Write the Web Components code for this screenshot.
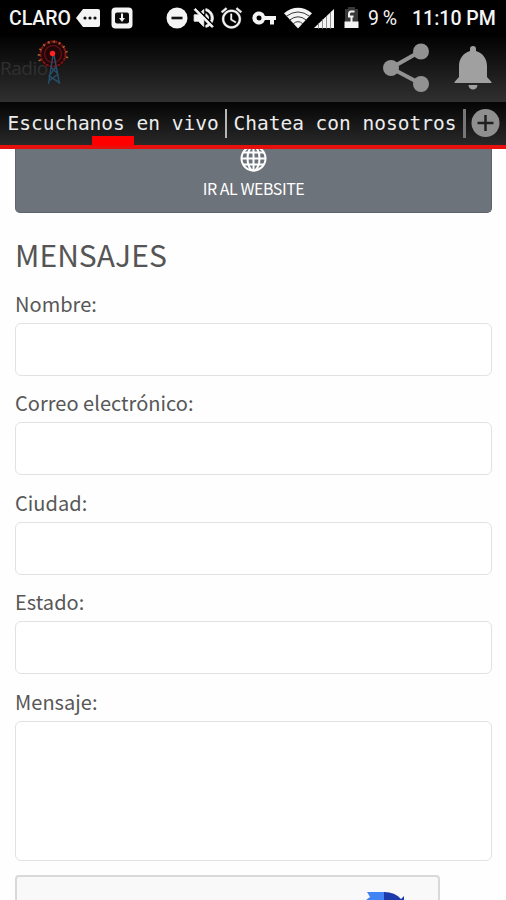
<!DOCTYPE html>
<html lang="es">
<head>
<meta charset="utf-8">
<title>Mensajes</title>
<style>
html,body{margin:0;height:100%;overflow:hidden;background:#fff}
</style>
</head>
<body>
<radio-app></radio-app>
<script>
const define = (name, html) => customElements.define(name, class extends HTMLElement {
  constructor() {
    super();
    const t = document.createElement('template');
    t.innerHTML = html;
    this.attachShadow({mode: 'open'}).appendChild(t.content.cloneNode(true));
  }
});

define('status-bar', `
<style>
:host{display:flex;align-items:center;height:36px;background:#000;color:#f4f4f4;font:500 19.5px/36px Roboto,sans-serif;white-space:nowrap}
svg{display:block;flex:none;fill:#f4f4f4}
span{padding-top:2px;line-height:34px}
.carrier{width:62px;margin-left:9px;letter-spacing:-.05px}
.pct{width:31px;margin-left:9px;font-weight:400;word-spacing:-1px}
.time{margin-left:13px;letter-spacing:0}
</style>
<span class="carrier">CLARO</span>
<svg style="margin-left:5px" width="25" height="20" viewBox="0 0 25 20"><path d="M7 1h15q2 0 2 2v14q0 2-2 2H7L0 10z"/><g fill="#111"><circle cx="9" cy="10" r="1.6"/><circle cx="14" cy="10" r="1.6"/><circle cx="19" cy="10" r="1.6"/></g></svg>
<svg style="margin-left:10px" width="22" height="22" viewBox="0 0 22 22"><rect x=".5" y=".5" width="21" height="21" rx="4"/><rect x="4" y="5.500" width="14" height="11" rx="2" fill="#0b0b0b"/><path d="M10 6.500h2v4.500h2L11 15l-3-4h2z"/></svg>
<svg style="margin-left:33px" width="22" height="22" viewBox="0 0 22 22"><circle cx="11" cy="11" r="10.500"/><path d="M5.500 9.700h11v2.600h-11z" fill="#111"/></svg>
<svg style="margin-left:4px" width="24" height="24" viewBox="1 1 22.500 22"><path d="M16.500 12c0-1.770-1.020-3.290-2.500-4.030v2.210l2.450 2.450c.030-.200.050-.410.050-.630zm2.500 0c0 .940-.200 1.820-.540 2.640l1.510 1.510C20.630 14.910 21 13.500 21 12c0-4.280-2.990-7.860-7-8.770v2.060c2.890.860 5 3.540 5 6.710zM4.270 3 3 4.270 7.730 9H3v6h4l5 5v-6.730l4.250 4.250c-.670.520-1.420.930-2.250 1.180v2.060c1.380-.310 2.630-.950 3.690-1.810L19.730 21 21 19.730l-9-9L4.270 3zM12 4 9.910 6.090 12 8.180V4z" stroke="#f4f4f4" stroke-width=".8"/></svg>
<svg style="margin-left:4px" width="23" height="24" viewBox="1 1 22 22"><path d="m22 5.720-4.600-3.860-1.290 1.530 4.600 3.860L22 5.720zM7.880 3.390 6.600 1.860 2 5.710l1.290 1.530 4.590-3.850zM12.500 8H11v6l4.750 2.850.750-1.230-4-2.370V8zM12 4c-4.970 0-9 4.030-9 9s4.020 9 9 9c4.970 0 9-4.030 9-9s-4.030-9-9-9zm0 16c-3.870 0-7-3.130-7-7s3.130-7 7-7 7 3.130 7 7-3.130 7-7 7z" stroke="#f4f4f4" stroke-width=".3"/></svg>
<svg style="margin-left:9px" width="24" height="14" viewBox="0 0 24 14"><path fill-rule="evenodd" d="M13 5A6.500 6.500 0 1 0 13 9h5v4.500h4V9h2V5zM7 4.500a2.500 2.500 0 1 1 0 5 2.500 2.500 0 0 1 0-5z"/></svg>
<svg style="margin-left:8px" width="28" height="22" viewBox="0 0 29 22"><path d="M0 6Q14.500-5 29 6L14.500 22z"/><path d="M2 9.500Q14.500 0 27 9.500M6 13Q14.500 6.500 23 13M9.500 17Q14.500 12.500 19.500 17" fill="none" stroke="#333" stroke-width="1"/></svg>
<svg style="margin-left:1px" width="22" height="21" viewBox="0 0 22 21"><path d="M1 20 21 1v19z"/><path d="M5.500 15v6M9.500 11v10M13.500 8v13M17.500 4v17" stroke="#777" stroke-width=".8"/></svg>
<svg style="margin-left:9px" width="15" height="22" viewBox="0 0 15 22"><path d="M4 0h7v2h3v13H1V2h3z" fill="#383838"/><path d="M.500 14.500h14V21H.500z"/><path d="M10.500 4.500H7q-2 0-2 3v2h4.500M7.500 9v6" fill="none" stroke="#f4f4f4" stroke-width="2"/></svg>
<span class="pct">9 %</span>
<span class="time">11:10 PM</span>
`);

define('app-header', `
<style>
:host{display:flex;align-items:flex-start;height:66px;background:linear-gradient(#020202,#303030)}
svg{display:block;flex:none}
.brand{display:grid;width:80px;height:66px;overflow:hidden}
.brand>*{grid-area:1/1}
.name{font:19px/24px "Open Sans",sans-serif;color:#303030;padding-top:20px;letter-spacing:-.5px}
.share{margin-left:302px;margin-top:6px}
.bell{margin-left:24px;margin-top:9px}
</style>
<div class="brand">
<span class="name">Radio</span>
<svg width="80" height="66" viewBox="0 0 80 66">
<circle cx="53" cy="18" r="14" fill="#260507" opacity=".85"/>
<g fill="none" stroke="#7d1518"><circle cx="53" cy="18" r="12.500" stroke-width="2" stroke-dasharray="3 1"/><circle cx="53" cy="18" r="8.500" stroke-width="1.500" stroke="#5c1114"/></g>
<path d="M40 25A14 14 0 1 1 66 25" fill="none" stroke="#a8652b" stroke-width="2.500" stroke-dasharray="1.500 4"/>
<path d="m53 19-4.500 29M54 19l5.500 29M51 31l7 7-9 7M56 31l-7 9 11 7" fill="none" stroke="#254d68" stroke-width="1.500"/>
<circle cx="52.500" cy="17.500" r="2.700" fill="#ff2222"/>
<path d="m13 25 4-2 2 2 4-2 5 3" fill="none" stroke="#111" stroke-width="3"/>
</svg></div>
<svg class="share" width="48" height="52" viewBox="0 0 48 52"><path d="M39 9 9 26l30 16" fill="none" stroke="#929292" stroke-width="4"/><g fill="#929292"><circle cx="39" cy="9.500" r="8"/><circle cx="9" cy="26" r="8"/><circle cx="39" cy="42" r="8"/></g></svg>
<svg class="bell" width="38" height="46" viewBox="0 0 38 46"><path d="M19 1a3 3 0 0 0-3 3v2C9 8 5 14 5 21v11L.500 37v1h37v-1L33 32V21C33 14 29 8 22 6V4a3 3 0 0 0-3-3zM14.500 40h9a4.500 4.500 0 0 1-9 0z" fill="#a0a0a0"/></svg>
`);

define('tab-bar', `
<style>
:host{display:flex;align-items:center;height:47px;box-sizing:border-box;border-bottom:4px solid #e8100c;background:linear-gradient(#050505,#292929);color:#ececec;font:19.500px/42px "DejaVu Sans Mono",monospace;white-space:pre;position:relative}
.a{width:211px;margin-left:7.500px}
.b{width:223px;margin-left:6.500px}
.a,.b{letter-spacing:-.010px}
.sep{width:2px;height:29px;margin-left:6.500px;background:#b5b5b5}
.sep.two{width:3px;margin-left:6px;background:#777}
.mark{position:absolute;left:92px;top:34px;width:42px;height:10px;background:#f00}
svg{display:block;margin-left:5.500px}
</style>
<span class="a">Escuchanos en vivo</span><i class="sep"></i>
<span class="b">Chatea con nosotros</span><i class="sep two"></i>
<svg width="29" height="29" viewBox="0 0 29 29"><circle cx="14.500" cy="14" r="14" fill="#8f8f8f"/><path d="M14.500 6v16M6.500 14h16" stroke="#202020" stroke-width="2.500"/></svg>
<i class="mark"></i>
`);

define('website-button', `
<style>
:host{display:flex;flex-direction:column;align-items:center;height:64px;box-sizing:border-box;background:#6d737a;border:1px solid #5e646b;border-top:0;border-radius:0 0 5px 5px;color:#fff;overflow:hidden}
svg{display:block;flex:none;margin-top:-4px}
span{font:16px/24px "Noto Sans CJK SC","Noto Sans CJK JP",sans-serif;margin-top:4px;letter-spacing:-.450px}
</style>
<svg width="27" height="27" viewBox="0 0 27 27" fill="none" stroke="#fff" stroke-width="2"><circle cx="13.500" cy="13.500" r="12"/><ellipse cx="13.500" cy="13.500" rx="6" ry="12"/><path d="M13.500 1v25M1 13.500h25M3 7.500h21M3 19.500h21"/></svg>
<span><slot></slot></span>
`);

define('form-field', `
<style>
:host{display:block;margin-bottom:9.450px}
label{display:block;height:37px;font:400 20px/36px "Noto Sans CJK SC","Noto Sans CJK JP",sans-serif;color:#575757;white-space:nowrap;letter-spacing:.03px}
.box{display:block;width:100%;height:var(--field-height,53px);box-sizing:border-box;border:1.500px solid #e2e2e2;border-radius:6px;background:#fff}
</style>
<label><slot></slot></label><div class="box" role="textbox"></div>
`);

define('captcha-panel', `
<style>
:host{display:block;width:425px;height:100px;box-sizing:border-box;border:2px solid #d9d9d9;border-radius:4px;background:#f9f9f9}
svg{display:block;margin:14px 0 0 349px}
</style>
<svg width="44" height="44" viewBox="0 0 44 44"><path d="M1 1h18v22H0V9l4-3z" fill="#4284f3"/><path d="M18 1Q29 1 35 8l3-3v20H18z" fill="#1c3aa9"/></svg>
`);

define('radio-app', `
<style>
:host{display:block;height:900px;overflow:hidden;background:#fefefe}
main{padding:0 14px 0 15px}
h2{margin:21px 0 12px;font:400 30px/40px "Noto Sans CJK SC","Noto Sans CJK JP",sans-serif;color:#555;letter-spacing:.05px}
.message{--field-height:140.500px;margin-bottom:14px}
</style>
<status-bar></status-bar><app-header></app-header><tab-bar></tab-bar>
<main>
<website-button>IR AL WEBSITE</website-button>
<h2>MENSAJES</h2>
<form-field>Nombre:</form-field>
<form-field>Correo electrónico:</form-field>
<form-field>Ciudad:</form-field>
<form-field>Estado:</form-field>
<form-field class="message">Mensaje:</form-field>
<captcha-panel></captcha-panel>
</main>
`);
</script>
</body>
</html>
